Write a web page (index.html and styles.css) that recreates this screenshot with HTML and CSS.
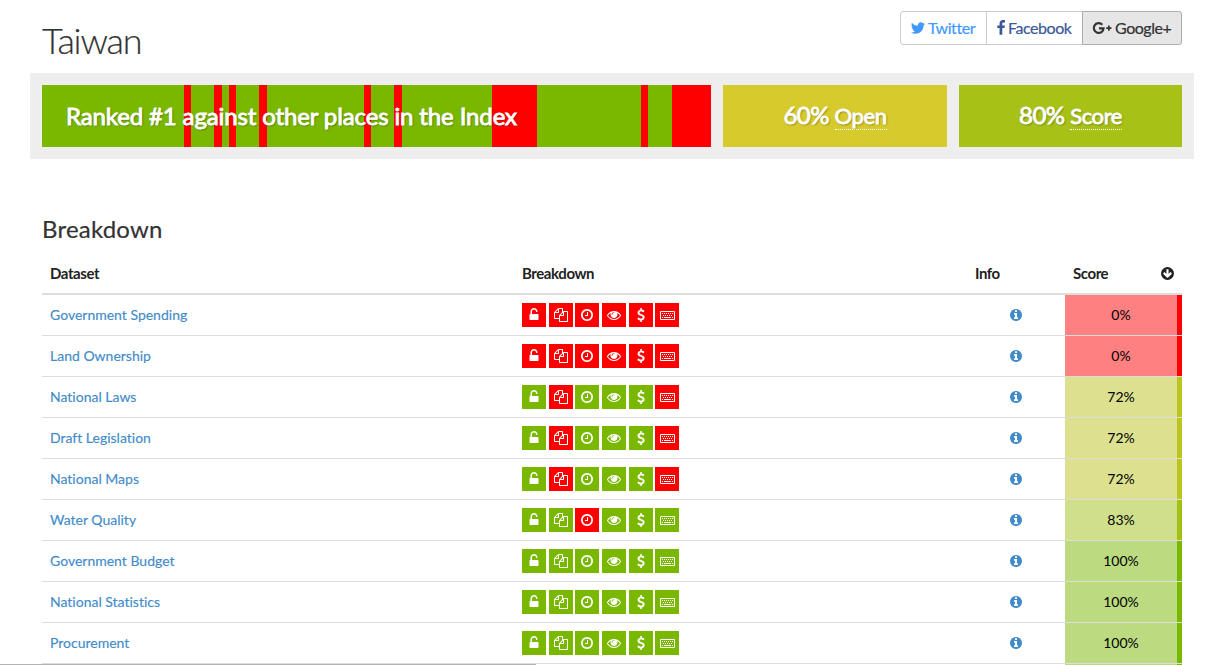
FILE: index.html
```
<!DOCTYPE html>
<html lang="en">
<head>
<meta charset="utf-8">
<title>Taiwan</title>
<link rel="stylesheet" href="styles.css">
</head>
<body>
<svg class="sprite" aria-hidden="true">
  <symbol id="twitter" viewBox="0 0 1792 1792"><path d="M1684 408q-67 98-162 167 1 14 1 42 0 130-38 259.500t-115.500 248.500-184.500 210.500-258 146-323 54.500q-271 0-496-145 35 4 78 4 225 0 401-138-105-2-188-64.500t-114-159.500q33 5 61 5 43 0 85-11-112-23-185.500-111.500t-73.500-205.500v-4q68 38 146 41-66-44-105-115t-39-154q0-88 44-163 121 149 294.500 238.500t371.500 99.500q-8-38-8-74 0-134 94.500-228.500t228.500-94.500q140 0 236 102 109-21 205-78-37 115-142 178 93-10 186-50z"/></symbol>
  <symbol id="facebook" viewBox="0 0 1792 1792"><path d="M1343 12v264h-157q-86 0-116 36t-30 108v189h293l-39 296h-254v759h-306v-759h-255v-296h255v-218q0-186 104-288.500t277-102.500q147 0 228 12z"/></symbol>
  <symbol id="google" viewBox="0 0 20 14"><path d="M10.300 3.700A4.900 4.900 0 1 0 11.600 7.300H7" fill="none" stroke="currentColor" stroke-width="2.200"/><path d="M14.200 7.200h5.300M16.850 4.550v5.300" fill="none" stroke="currentColor" stroke-width="1.700"/></symbol>
  <symbol id="info" viewBox="0 0 1792 1792"><path d="M1152 1376v-160q0-14-9-23t-23-9h-96v-512q0-14-9-23t-23-9h-320q-14 0-23 9t-9 23v160q0 14 9 23t23 9h96v320h-96q-14 0-23 9t-9 23v160q0 14 9 23t23 9h448q14 0 23-9t9-23zm-128-896v-160q0-14-9-23t-23-9h-192q-14 0-23 9t-9 23v160q0 14 9 23t23 9h192q14 0 23-9t9-23zm640 416q0 209-103 385.500t-279.500 279.500-385.500 103-385.500-103-279.500-279.500-103-385.500 103-385.500 279.500-279.500 385.500-103 385.500 103 279.500 279.500 103 385.500z"/></symbol>
  <symbol id="down" viewBox="0 0 1792 1792"><path d="M1412 897q0-27-18-45l-91-91q-18-18-45-18t-45 18l-189 189v-502q0-26-19-45t-45-19h-128q-26 0-45 19t-19 45v502l-189-189q-19-19-45-19t-45 19l-91 91q-18 18-18 45t18 45l362 362 91 91q18 18 45 18t45-18l91-91 362-362q18-18 18-45zm252-1q0 209-103 385.500t-279.500 279.500-385.500 103-385.500-103-279.500-279.500-103-385.500 103-385.500 279.500-279.500 385.500-103 385.500 103 279.500 279.500 103 385.500z"/></symbol>
  <symbol id="lock" viewBox="0 0 1792 1792"><path d="M1376 768q40 0 68 28t28 68v576q0 40-28 68t-68 28h-960q-40 0-68-28t-28-68v-576q0-40 28-68t68-28h32v-320q0-185 131.500-316.500t316.500-131.500 316.500 131.500 131.500 316.500q0 26-19 45t-45 19h-64q-26 0-45-19t-19-45q0-106-75-181t-181-75-181 75-75 181v320h736z"/></symbol>
  <symbol id="files" viewBox="0 0 1792 1792"><path d="M1696 384q40 0 68 28t28 68v1216q0 40-28 68t-68 28h-960q-40 0-68-28t-28-68v-288h-544q-40 0-68-28t-28-68v-672q0-40 20-88t48-76l408-408q28-28 76-48t88-20h416q40 0 68 28t28 68v328q68-40 128-40h416zm-544 213l-299 299h299v-299zm-640-384l-299 299h299v-299zm196 647l316-316v-416h-384v416q0 40-28 68t-68 28h-416v640h512v-256q0-40 20-88t48-76zm956 804v-1152h-384v416q0 40-28 68t-68 28h-416v640h896z"/></symbol>
  <symbol id="clock" viewBox="0 0 1792 1792"><path d="M1024 544v448q0 14-9 23t-23 9h-320q-14 0-23-9t-9-23v-64q0-14 9-23t23-9h224v-352q0-14 9-23t23-9h64q14 0 23 9t9 23zm416 352q0-148-73-273t-198-198-273-73-273 73-198 198-73 273 73 273 198 198 273 73 273-73 198-198 73-273zm224 0q0 209-103 385.500t-279.500 279.500-385.500 103-385.500-103-279.500-279.500-103-385.500 103-385.500 279.500-279.500 385.500-103 385.500 103 279.500 279.500 103 385.500z"/></symbol>
  <symbol id="eye" viewBox="0 0 1792 1792"><path d="M1664 960q-152-236-381-353 61 104 61 225 0 185-131.500 316.500t-316.500 131.500-316.500-131.500-131.500-316.500q0-121 61-225-229 117-381 353 133 205 333.500 326.500t434.500 121.500 434.500-121.500 333.500-326.500zm-720-384q0-20-14-34t-34-14q-125 0-214.500 89.500t-89.500 214.500q0 20 14 34t34 14 34-14 14-34q0-86 61-147t147-61q20 0 34-14t14-34zm848 384q0 34-20 69-140 230-376.500 368.500t-499.500 138.500-499.500-139-376.500-368q-20-35-20-69t20-69q140-229 376.500-368t499.500-139 499.500 139 376.500 368q20 35 20 69z"/></symbol>
  <symbol id="dollar" viewBox="0 0 1792 1792"><path d="M1362 1185q0 153-99.500 263.500t-258.500 136.500v175q0 14-9 23t-23 9h-135q-13 0-22.500-9.500t-9.500-22.500v-175q-66-9-127.500-31t-101.500-44.500-74-48-46.500-37.500-17.500-18q-17-21-2-41l103-135q7-10 23-12 15-2 24 9l2 2q113 99 243 125 37 8 74 8 81 0 142.500-43t61.500-122q0-28-15-53t-33.500-42-58.500-37.500-66-32-80-32.500q-39-16-61.500-25t-61.500-26.500-62.500-31-56.500-35.500-53.500-42.500-43.500-49-35.500-58-21-66.500-8.500-78q0-138 98-242t255-134v-180q0-13 9.500-22.500t22.500-9.500h135q14 0 23 9t9 23v176q57 6 110.500 23t87 33.500 63.500 37.500 39 29 15 14q17 18 5 38l-81 146q-8 15-23 16-14 3-27-7-3-3-14.500-12t-39-26.500-58.500-32-74.500-26-85.500-11.500q-95 0-155 43t-60 111q0 26 8.500 48t29.500 41.500 39.500 33 56 31 60.500 27 70 27.500q53 20 81 31.500t76 35 75.500 42.500 62 50 53 63.500 31.500 76.500 13 94z"/></symbol>
  <symbol id="keys" viewBox="0 0 15 9"><path d="M.5.5h14v8H.5z" fill="none" stroke="currentColor"/><path d="M2 2.500h11M3 4.500h9" stroke="currentColor" stroke-dasharray="1 1" fill="none"/><path d="M2 6.500h1M4 6.500h7M12 6.500h1" stroke="currentColor" fill="none"/></symbol>
</svg>

<main class="page">
  <header class="head">
    <h1 class="title">Taiwan</h1>
    <div class="share">
      <a class="share-btn twitter"><svg class="ico"><use href="#twitter"/></svg>Twitter</a>
      <a class="share-btn facebook"><svg class="ico ico-fb"><use href="#facebook"/></svg>Facebook</a>
      <a class="share-btn google"><svg class="ico ico-g"><use href="#google"/></svg>Google+</a>
    </div>
  </header>

  <section class="summary">
    <div class="box rank"><span>Ranked #1 against other places in the Index</span></div>
    <div class="box open"><span>60% <a class="term">Open</a></span></div>
    <div class="box score"><span>80% <a class="term">Score</a></span></div>
  </section>

  <h2 class="subtitle">Breakdown</h2>
  <table class="data">
    <colgroup><col class="c-name"><col class="c-break"><col class="c-info"><col class="c-score"></colgroup>
    <thead>
      <tr><th>Dataset</th><th>Breakdown</th><th>Info</th><th><div class="sort">Score<svg class="ico-sm"><use href="#down"/></svg></div></th></tr>
    </thead>
    <tbody>
      <tr><td><a>Government Spending</a></td><td><div class="tiles"><i class="no"><svg><use href="#lock"/></svg></i><i class="no"><svg><use href="#files"/></svg></i><i class="no"><svg><use href="#clock"/></svg></i><i class="no"><svg><use href="#eye"/></svg></i><i class="no"><svg><use href="#dollar"/></svg></i><i class="no"><svg class="kb"><use href="#keys"/></svg></i></div></td><td class="info"><svg class="ico-sm"><use href="#info"/></svg></td><td class="pct s0">0%</td></tr>
      <tr><td><a>Land Ownership</a></td><td><div class="tiles"><i class="no"><svg><use href="#lock"/></svg></i><i class="no"><svg><use href="#files"/></svg></i><i class="no"><svg><use href="#clock"/></svg></i><i class="no"><svg><use href="#eye"/></svg></i><i class="no"><svg><use href="#dollar"/></svg></i><i class="no"><svg class="kb"><use href="#keys"/></svg></i></div></td><td class="info"><svg class="ico-sm"><use href="#info"/></svg></td><td class="pct s0">0%</td></tr>
      <tr><td><a>National Laws</a></td><td><div class="tiles"><i><svg><use href="#lock"/></svg></i><i class="no"><svg><use href="#files"/></svg></i><i><svg><use href="#clock"/></svg></i><i><svg><use href="#eye"/></svg></i><i><svg><use href="#dollar"/></svg></i><i class="no"><svg class="kb"><use href="#keys"/></svg></i></div></td><td class="info"><svg class="ico-sm"><use href="#info"/></svg></td><td class="pct s72">72%</td></tr>
      <tr><td><a>Draft Legislation</a></td><td><div class="tiles"><i><svg><use href="#lock"/></svg></i><i class="no"><svg><use href="#files"/></svg></i><i><svg><use href="#clock"/></svg></i><i><svg><use href="#eye"/></svg></i><i><svg><use href="#dollar"/></svg></i><i class="no"><svg class="kb"><use href="#keys"/></svg></i></div></td><td class="info"><svg class="ico-sm"><use href="#info"/></svg></td><td class="pct s72">72%</td></tr>
      <tr><td><a>National Maps</a></td><td><div class="tiles"><i><svg><use href="#lock"/></svg></i><i class="no"><svg><use href="#files"/></svg></i><i><svg><use href="#clock"/></svg></i><i><svg><use href="#eye"/></svg></i><i><svg><use href="#dollar"/></svg></i><i class="no"><svg class="kb"><use href="#keys"/></svg></i></div></td><td class="info"><svg class="ico-sm"><use href="#info"/></svg></td><td class="pct s72">72%</td></tr>
      <tr><td><a>Water Quality</a></td><td><div class="tiles"><i><svg><use href="#lock"/></svg></i><i><svg><use href="#files"/></svg></i><i class="no"><svg><use href="#clock"/></svg></i><i><svg><use href="#eye"/></svg></i><i><svg><use href="#dollar"/></svg></i><i><svg class="kb"><use href="#keys"/></svg></i></div></td><td class="info"><svg class="ico-sm"><use href="#info"/></svg></td><td class="pct s83">83%</td></tr>
      <tr><td><a>Government Budget</a></td><td><div class="tiles"><i><svg><use href="#lock"/></svg></i><i><svg><use href="#files"/></svg></i><i><svg><use href="#clock"/></svg></i><i><svg><use href="#eye"/></svg></i><i><svg><use href="#dollar"/></svg></i><i><svg class="kb"><use href="#keys"/></svg></i></div></td><td class="info"><svg class="ico-sm"><use href="#info"/></svg></td><td class="pct s100">100%</td></tr>
      <tr><td><a>National Statistics</a></td><td><div class="tiles"><i><svg><use href="#lock"/></svg></i><i><svg><use href="#files"/></svg></i><i><svg><use href="#clock"/></svg></i><i><svg><use href="#eye"/></svg></i><i><svg><use href="#dollar"/></svg></i><i><svg class="kb"><use href="#keys"/></svg></i></div></td><td class="info"><svg class="ico-sm"><use href="#info"/></svg></td><td class="pct s100">100%</td></tr>
      <tr><td><a>Procurement</a></td><td><div class="tiles"><i><svg><use href="#lock"/></svg></i><i><svg><use href="#files"/></svg></i><i><svg><use href="#clock"/></svg></i><i><svg><use href="#eye"/></svg></i><i><svg><use href="#dollar"/></svg></i><i><svg class="kb"><use href="#keys"/></svg></i></div></td><td class="info"><svg class="ico-sm"><use href="#info"/></svg></td><td class="pct s100">100%</td></tr>
      <tr class="cut"><td></td><td></td><td></td><td class="pct s100"></td></tr>
    </tbody>
  </table>
</main>
<div class="status-edge"></div>
</body>
</html>
```
FILE: styles.css
```
* { box-sizing: border-box; }
html, body { margin: 0; height: 665px; overflow: hidden; }
body { background: #fff; color: #333; font: 14px/20px Lato, sans-serif; font-variant-ligatures: none; }
svg { fill: currentColor; display: block; flex: none; }
.sprite { display: none; }
.page { width: 1164px; margin-left: 30px; }

.head { display: flex; justify-content: space-between; height: 73px; padding: 11px 12px 0; }
.title { margin: 9px 0 0; font-size: 36px; line-height: 40px; font-weight: 300; letter-spacing: -1.200px; -webkit-text-stroke: .2px; }
.share { display: flex; height: 34px; }
.share-btn { display: flex; align-items: center; border: 1px solid #ccc; font-size: 16px; letter-spacing: -.45px; -webkit-text-stroke: .2px; }
.share-btn + .share-btn { margin-left: -1px; }
.twitter { width: 87px; padding-left: 9px; color: #4099ff; border-radius: 3px 0 0 3px; }
.facebook { width: 97px; padding-left: 9px; color: #3b5998; }
.google { width: 100px; padding-left: 9px; color: #333; background: #e6e6e6; border-color: #adadad; border-radius: 0 3px 3px 0; }
.ico { width: 16px; height: 16px; margin-right: 2px; }
.ico-fb { margin: 0 -1px 0 -3px; }
.ico-g { width: 20px; height: 14px; margin-right: 3px; }

.summary { display: grid; grid-template-columns: 669px 224px 223px; gap: 12px; height: 86px; padding: 12px; background: #eee; }
.box { display: flex; align-items: center; justify-content: center; height: 62px; padding-bottom: 1px; color: #fff; font-size: 24px; font-weight: 400; letter-spacing: -.5px; -webkit-text-stroke: .9px #fff; text-shadow: 1px 1px 2px rgba(0, 0, 0, .4); }
.rank { letter-spacing: -.13px; justify-content: flex-start; padding-left: 24px; background: linear-gradient(90deg, #7ab800 142px, red 142px 149px, #7ab800 149px 172px, red 172px 180px, #7ab800 180px 187px, red 187px 194px, #7ab800 194px 217px, red 217px 225px, #7ab800 225px 322px, red 322px 329px, #7ab800 329px 352px, red 352px 360px, #7ab800 360px 450px, red 450px 495px, #7ab800 495px 599px, red 599px 606px, #7ab800 606px 630px, red 630px); }
.open { background: #d7ca2d; }
.score { background: #a7c116; }
.term { font-size: 22px; letter-spacing: -.4px; border-bottom: 1px dotted #fff; }

.subtitle { margin: 56px 12px 10px; font-size: 24px; line-height: 28px; font-weight: 400; letter-spacing: .2px; -webkit-text-stroke: .2px; }
.data { width: 1140px; margin-left: 12px; table-layout: fixed; border-spacing: 0; }
.c-name { width: 472px; }
.c-break { width: 453px; }
.c-info { width: 98px; }
.c-score { width: 117px; }
th { height: 42px; padding: 0 8px; border-bottom: 2px solid #ddd; text-align: left; color: #222; font-size: 15px; letter-spacing: -.42px; }
td { height: 41px; padding: 0 8px; border-bottom: 1px solid #ddd; vertical-align: middle; }
td a { color: #428bca; -webkit-text-stroke: .15px; }
.sort { display: flex; align-items: center; justify-content: space-between; }
.ico-sm { width: 14px; height: 14px; }
.sort .ico-sm { width: 15px; height: 15px; margin-right: -1px; }
.info { color: #428bca; }
.info .ico-sm { margin: 0 auto; }
.tiles { display: flex; gap: 2.670px; }
.tiles i { display: flex; align-items: center; justify-content: center; width: 24px; height: 24px; background: #7ab800; color: #fff; }
.tiles .no { background: red; }
.tiles svg { width: 14px; height: 14px; }
.tiles .kb { width: 15px; height: 9px; }
.pct { text-align: center; padding-right: 13px; color: #000; background-clip: padding-box; }
.s0 { background-color: #ff8080; box-shadow: inset -5px 0 red; }
.s72 { background-color: #dce08f; box-shadow: inset -5px 0 #bac520; }
.s83 { background-color: #d0df8b; box-shadow: inset -5px 0 #a2c117; }
.s100 { background-color: #bcdb80; box-shadow: inset -5px 0 #7ab800; }
.cut td { height: 1px; border: 0; }
.status-edge { position: fixed; left: 0; bottom: 0; width: 536px; height: 1px; background: #b4b4b4; }
```
